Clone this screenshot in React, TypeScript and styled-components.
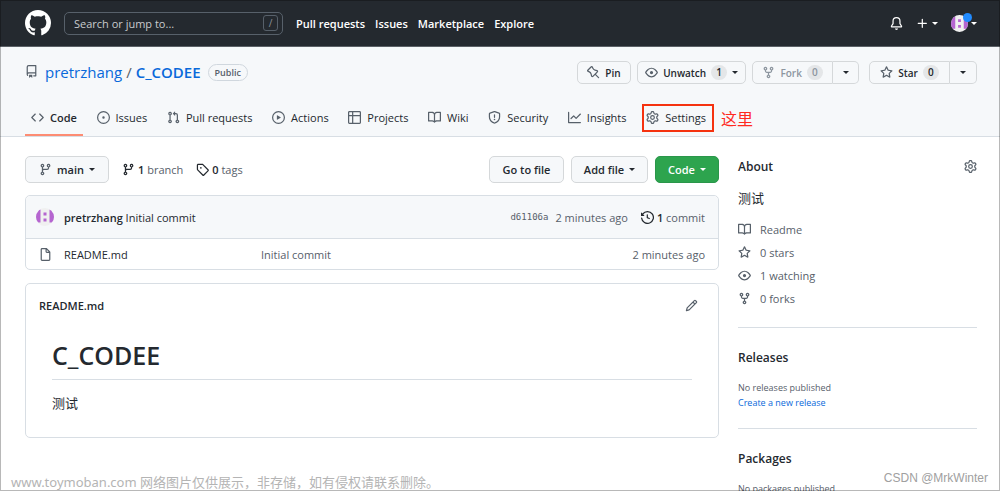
import React from "react";
import styled, { createGlobalStyle, css } from "styled-components";

const GlobalStyle = createGlobalStyle`
  * { box-sizing: border-box; }
  html, body { margin: 0; padding: 0; }
  body {
    background: #fff;
    color: #24292f;
    font-family: "Open Sans", "Noto Sans", "Noto Sans CJK SC", sans-serif;
    font-size: 11px;
    line-height: 15px;
  }
  a { color: inherit; text-decoration: none; }
  b { font-weight: 600; }
  h1, h2, h3, p, ul, dl { margin: 0; padding: 0; }
  button { font-family: inherit; cursor: pointer; }
`;

/* ---------- icons ---------- */

const paths = {
  mark: "M8 0C3.58 0 0 3.58 0 8c0 3.54 2.29 6.53 5.47 7.59.4.07.55-.17.55-.38 0-.19-.01-.82-.01-1.49-2.01.37-2.53-.49-2.69-.94-.09-.23-.48-.94-.82-1.13-.28-.15-.68-.52-.01-.53.63-.01 1.08.58 1.23.82.72 1.21 1.87.87 2.33.66.07-.52.28-.87.51-1.07-1.78-.2-3.64-.89-3.64-3.95 0-.87.31-1.59.82-2.15-.08-.2-.36-1.02.08-2.12 0 0 .67-.21 2.2.82.64-.18 1.32-.27 2-.27.68 0 1.36.09 2 .27 1.53-1.04 2.2-.82 2.2-.82.44 1.1.16 1.92.08 2.12.51.56.82 1.27.82 2.15 0 3.07-1.87 3.75-3.65 3.95.29.25.54.73.54 1.48 0 1.07-.01 1.93-.01 2.2 0 .21.15.46.55.38A8.013 8.013 0 0016 8c0-4.42-3.58-8-8-8z",
  code: "M4.72 3.22a.75.75 0 011.06 1.06L2.06 8l3.72 3.72a.75.75 0 11-1.06 1.06L.47 8.53a.75.75 0 010-1.06l4.25-4.25zm6.56 0a.75.75 0 10-1.06 1.06L13.94 8l-3.72 3.72a.75.75 0 101.06 1.06l4.25-4.25a.75.75 0 000-1.06l-4.25-4.25z",
  issue: "M8 9.5a1.5 1.5 0 100-3 1.5 1.5 0 000 3zM8 0a8 8 0 100 16A8 8 0 008 0zM1.5 8a6.5 6.5 0 1113 0 6.5 6.5 0 01-13 0z",
  pull: "M7.177 3.073L9.573.677A.25.25 0 0110 .854v4.792a.25.25 0 01-.427.177L7.177 3.427a.25.25 0 010-.354zM3.75 2.5a.75.75 0 100 1.5.75.75 0 000-1.5zm-2.25.75a2.25 2.25 0 113 2.122v5.256a2.251 2.251 0 11-1.5 0V5.372A2.25 2.25 0 011.5 3.25zM11 2.5h-1V4h1a1 1 0 011 1v5.628a2.251 2.251 0 101.5 0V5A2.5 2.5 0 0011 2.5zm1 10.25a.75.75 0 111.5 0 .75.75 0 01-1.5 0zM3.75 12a.75.75 0 100 1.5.75.75 0 000-1.5z",
  play: "M1.5 8a6.5 6.5 0 1113 0 6.5 6.5 0 01-13 0zM8 0a8 8 0 100 16A8 8 0 008 0zM6.379 5.227A.25.25 0 006 5.442v5.117a.25.25 0 00.379.214l4.264-2.559a.25.25 0 000-.428L6.379 5.227z",
  table: "M0 1.75C0 .784.784 0 1.75 0h12.5C15.216 0 16 .784 16 1.75v12.5A1.75 1.75 0 0114.25 16H1.75A1.75 1.75 0 010 14.25V1.75zM1.5 6.5v7.75c0 .138.112.25.25.25H5v-8H1.5zM5 5H1.5V1.75a.25.25 0 01.25-.25H5V5zm1.5 1.5v8h7.75a.25.25 0 00.25-.25V6.5h-8zm8-1.5h-8V1.5h7.75a.25.25 0 01.25.25V5z",
  book: "M0 1.75A.75.75 0 01.75 1h4.253c1.227 0 2.317.59 3 1.501A3.744 3.744 0 0111.006 1h4.245a.75.75 0 01.75.75v10.5a.75.75 0 01-.75.75h-4.507a2.25 2.25 0 00-1.591.659l-.622.621a.75.75 0 01-1.06 0l-.622-.621A2.25 2.25 0 005.258 13H.75a.75.75 0 01-.75-.75V1.75zm8.755 3a2.25 2.25 0 012.25-2.25H14.5v9h-3.757c-.71 0-1.4.201-1.992.572l.004-7.322zm-1.504 7.324l.004-5.073-.002-2.253A2.25 2.25 0 005.003 2.5H1.5v9h3.757a3.75 3.75 0 011.994.574z",
  shield: "M7.467.133a1.75 1.75 0 011.066 0l5.25 1.68A1.75 1.75 0 0115 3.48V7c0 1.566-.32 3.182-1.303 4.682-.983 1.498-2.585 2.813-5.032 3.855a1.7 1.7 0 01-1.33 0c-2.447-1.042-4.049-2.357-5.032-3.855C1.32 10.182 1 8.566 1 7V3.48a1.75 1.75 0 011.217-1.667l5.25-1.68zm.61 1.429a.25.25 0 00-.153 0l-5.25 1.68a.25.25 0 00-.174.238V7c0 1.358.275 2.666 1.057 3.86.784 1.194 2.121 2.34 4.366 3.297a.2.2 0 00.154 0c2.245-.956 3.582-2.104 4.366-3.298C13.225 9.666 13.5 8.36 13.5 7V3.48a.25.25 0 00-.174-.237l-5.25-1.68zM9 10.5a1 1 0 11-2 0 1 1 0 012 0zm-.25-5.75a.75.75 0 10-1.5 0v3a.75.75 0 001.5 0v-3z",
  graph: "M1.5 1.75a.75.75 0 00-1.5 0v12.5c0 .414.336.75.75.75h14.5a.75.75 0 000-1.5H1.5V1.75zm14.28 2.53a.75.75 0 00-1.06-1.06L10 7.94 7.53 5.47a.75.75 0 00-1.06 0L3.22 8.72a.75.75 0 001.06 1.06L7 7.06l2.47 2.47a.75.75 0 001.06 0l5.25-5.25z",
  gear: "M7.429 1.525a6.593 6.593 0 011.142 0c.036.003.108.036.137.146l.289 1.105c.147.56.55.967.997 1.189.174.086.341.183.501.29.417.278.97.423 1.53.27l1.102-.303c.11-.03.175.016.195.046.219.31.41.641.573.989.014.031.022.11-.059.19l-.815.806c-.411.406-.562.957-.53 1.456a4.588 4.588 0 010 .582c-.032.499.119 1.05.53 1.456l.815.806c.08.08.073.159.059.19a6.494 6.494 0 01-.573.99c-.02.029-.086.074-.195.045l-1.103-.303c-.559-.153-1.112-.008-1.529.27-.16.107-.327.204-.5.29-.449.222-.851.628-.998 1.189l-.289 1.105c-.029.11-.101.143-.137.146a6.613 6.613 0 01-1.142 0c-.036-.003-.108-.037-.137-.146l-.289-1.105c-.147-.56-.55-.967-.997-1.189a4.502 4.502 0 01-.501-.29c-.417-.278-.97-.423-1.53-.27l-1.102.303c-.11.03-.175-.016-.195-.046a6.492 6.492 0 01-.573-.989c-.014-.031-.022-.11.059-.19l.815-.806c.411-.406.562-.957.53-1.456a4.587 4.587 0 010-.582c.032-.499-.119-1.05-.53-1.456l-.815-.806c-.08-.08-.073-.159-.059-.19a6.44 6.44 0 01.573-.99c.02-.029.086-.075.195-.045l1.103.303c.559.153 1.112.008 1.529-.27.16-.107.327-.204.5-.29.449-.222.851-.628.998-1.189l.289-1.105c.029-.11.101-.143.137-.146zM8 0c-.236 0-.47.01-.701.03-.743.065-1.29.615-1.458 1.261l-.29 1.106c-.017.066-.078.158-.211.224a5.994 5.994 0 00-.668.386c-.123.082-.233.09-.3.071L3.27 2.776c-.644-.177-1.392.02-1.82.63a7.977 7.977 0 00-.704 1.217c-.315.675-.111 1.422.363 1.891l.815.806c.05.048.098.147.088.294a6.084 6.084 0 000 .772c.01.147-.038.246-.088.294l-.815.806c-.474.469-.678 1.216-.363 1.891.2.428.436.835.704 1.218.428.609 1.176.806 1.82.63l1.103-.303c.066-.019.176-.011.299.071.213.143.436.272.668.386.133.066.194.158.212.224l.289 1.106c.169.646.715 1.196 1.458 1.26a8.094 8.094 0 001.402 0c.743-.064 1.29-.614 1.458-1.26l.29-1.106c.017-.066.078-.158.211-.224a5.98 5.98 0 00.668-.386c.123-.082.233-.09.3-.071l1.102.302c.644.177 1.392-.02 1.82-.63.268-.382.505-.789.704-1.217.315-.675.111-1.422-.364-1.891l-.814-.806c-.05-.048-.098-.147-.088-.294a6.1 6.1 0 000-.772c-.01-.147.039-.246.088-.294l.814-.806c.475-.469.679-1.216.364-1.891a7.992 7.992 0 00-.704-1.218c-.428-.609-1.176-.806-1.82-.63l-1.103.303c-.066.019-.176.011-.299-.071a5.991 5.991 0 00-.668-.386c-.133-.066-.194-.158-.212-.224L10.16 1.29C9.99.645 9.444.095 8.701.031A8.094 8.094 0 008 0zm1.5 8a1.5 1.5 0 11-3 0 1.5 1.5 0 013 0zM11 8a3 3 0 11-6 0 3 3 0 016 0z",
  repo: "M2 2.5A2.5 2.5 0 014.5 0h8.75a.75.75 0 01.75.75v12.5a.75.75 0 01-.75.75h-2.5a.75.75 0 110-1.5h1.75v-2h-8a1 1 0 00-.714 1.7.75.75 0 01-1.072 1.05A2.495 2.495 0 012 11.5v-9zm10.5-1V9h-8c-.356 0-.694.074-1 .208V2.5a1 1 0 011-1h8zM5 12.25v3.25a.25.25 0 00.4.2l1.45-1.087a.25.25 0 01.3 0L8.6 15.7a.25.25 0 00.4-.2v-3.25a.25.25 0 00-.25-.25h-3.5a.25.25 0 00-.25.25z",
  pin: "M4.456.734a1.75 1.75 0 012.826.504l.613 1.327a3.081 3.081 0 002.084 1.707l2.454.584c1.332.317 1.8 1.972.832 2.94L11.06 10l3.72 3.72a.75.75 0 11-1.061 1.06L10 11.06l-2.204 2.205c-.968.968-2.623.5-2.94-.832l-.584-2.454a3.081 3.081 0 00-1.707-2.084l-1.327-.613a1.75 1.75 0 01-.504-2.826L4.456.734zM5.92 1.866a.25.25 0 00-.404-.072L1.794 5.516a.25.25 0 00.072.404l1.328.613A4.582 4.582 0 015.73 9.63l.584 2.454a.25.25 0 00.42.12l5.47-5.47a.25.25 0 00-.12-.42L9.63 5.73a4.581 4.581 0 01-3.098-2.537L5.92 1.866z",
  eye: "M1.679 7.932c.412-.621 1.242-1.75 2.366-2.717C5.175 4.242 6.527 3.5 8 3.5c1.473 0 2.824.742 3.955 1.715 1.124.967 1.954 2.096 2.366 2.717a.119.119 0 010 .136c-.412.621-1.242 1.75-2.366 2.717C10.825 11.758 9.473 12.5 8 12.5c-1.473 0-2.824-.742-3.955-1.715C2.92 9.818 2.09 8.69 1.679 8.068a.119.119 0 010-.136zM8 2c-1.981 0-3.67.992-4.933 2.078C1.797 5.169.88 6.423.43 7.1a1.619 1.619 0 000 1.798c.45.678 1.367 1.932 2.637 3.024C4.329 13.008 6.019 14 8 14c1.981 0 3.67-.992 4.933-2.078 1.27-1.091 2.187-2.345 2.637-3.023a1.619 1.619 0 000-1.798c-.45-.678-1.367-1.932-2.637-3.023C11.671 2.992 9.981 2 8 2zm0 8a2 2 0 100-4 2 2 0 000 4z",
  fork: "M5 3.25a.75.75 0 11-1.5 0 .75.75 0 011.5 0zm0 2.122a2.25 2.25 0 10-1.5 0v.878A2.25 2.25 0 005.75 8.5h1.5v2.128a2.251 2.251 0 101.5 0V8.5h1.5a2.25 2.25 0 002.25-2.25v-.878a2.25 2.25 0 10-1.5 0v.878a.75.75 0 01-.75.75h-4.5A.75.75 0 015 6.25v-.878zm3.75 7.378a.75.75 0 11-1.5 0 .75.75 0 011.5 0zm3-8.75a.75.75 0 100-1.5.75.75 0 000 1.5z",
  star: "M8 .25a.75.75 0 01.673.418l1.882 3.815 4.21.612a.75.75 0 01.416 1.279l-3.046 2.97.719 4.192a.75.75 0 01-1.088.791L8 12.347l-3.766 1.98a.75.75 0 01-1.088-.79l.72-4.194L.818 6.374a.75.75 0 01.416-1.28l4.21-.611L7.327.668A.75.75 0 018 .25zm0 2.445L6.615 5.5a.75.75 0 01-.564.41l-3.097.45 2.24 2.184a.75.75 0 01.216.664l-.528 3.084 2.769-1.456a.75.75 0 01.698 0l2.77 1.456-.53-3.084a.75.75 0 01.216-.664l2.24-2.183-3.096-.45a.75.75 0 01-.564-.41L8 2.694v.001z",
  branch: "M11.75 2.5a.75.75 0 100 1.5.75.75 0 000-1.5zm-2.25.75a2.25 2.25 0 113 2.122V6A2.5 2.5 0 0110 8.5H6a1 1 0 00-1 1v1.128a2.251 2.251 0 11-1.5 0V5.372a2.25 2.25 0 111.5 0v1.836A2.492 2.492 0 016 7h4a1 1 0 001-1v-.628A2.25 2.25 0 019.5 3.25zM4.25 12a.75.75 0 100 1.5.75.75 0 000-1.5zM3.5 3.25a.75.75 0 111.5 0 .75.75 0 01-1.5 0z",
  tag: "M2.5 7.775V2.75a.25.25 0 01.25-.25h5.025a.25.25 0 01.177.073l6.25 6.25a.25.25 0 010 .354l-5.025 5.025a.25.25 0 01-.354 0l-6.25-6.25a.25.25 0 01-.073-.177zm-1.5 0V2.75C1 1.784 1.784 1 2.75 1h5.025c.464 0 .91.184 1.238.513l6.25 6.25a1.75 1.75 0 010 2.474l-5.026 5.026a1.75 1.75 0 01-2.474 0l-6.25-6.25A1.75 1.75 0 011 7.775zM6 5a1 1 0 100 2 1 1 0 000-2z",
  history: "M1.643 3.143L.427 1.927A.25.25 0 000 2.104V5.75c0 .138.112.25.25.25h3.646a.25.25 0 00.177-.427L2.715 4.215a6.5 6.5 0 11-1.18 4.458.75.75 0 10-1.493.154 8.001 8.001 0 101.6-5.684zM7.75 4a.75.75 0 01.75.75v2.992l2.028.812a.75.75 0 01-.557 1.392l-2.5-1A.75.75 0 017 8.25v-3.5A.75.75 0 017.75 4z",
  file: "M3.75 1.5a.25.25 0 00-.25.25v12.5c0 .138.112.25.25.25h8.5a.25.25 0 00.25-.25V6H9.75A1.75 1.75 0 018 4.25V1.5H3.75zm5.75.56v2.19c0 .138.112.25.25.25h2.19L9.5 2.06zM2 1.75C2 .784 2.784 0 3.75 0h5.086c.464 0 .909.184 1.237.513l3.414 3.414c.329.328.513.773.513 1.237v9.086A1.75 1.75 0 0112.25 16h-8.5A1.75 1.75 0 012 14.25V1.75z",
  pencil: "M11.013 1.427a1.75 1.75 0 012.474 0l1.086 1.086a1.75 1.75 0 010 2.474l-8.61 8.61c-.21.21-.47.364-.756.445l-3.251.93a.75.75 0 01-.927-.928l.929-3.25a1.75 1.75 0 01.445-.758l8.61-8.61zm1.414 1.06a.25.25 0 00-.354 0L10.811 3.75l1.439 1.44 1.263-1.263a.25.25 0 000-.354l-1.086-1.086zM11.189 6.25L9.75 4.81l-6.286 6.287a.25.25 0 00-.064.108l-.558 1.953 1.953-.558a.249.249 0 00.108-.064l6.286-6.286z",
  bell: "M8 16a2 2 0 001.985-1.75c.017-.137-.097-.25-.235-.25h-3.5c-.138 0-.252.113-.235.25A2 2 0 008 16zM8 1.5A3.5 3.5 0 004.5 5v2.947c0 .346-.102.683-.294.97l-1.703 2.556a.018.018 0 00-.003.01l.001.006c0 .002.002.004.004.006a.017.017 0 00.006.004l.007.001h10.964l.007-.001a.016.016 0 00.006-.004.016.016 0 00.004-.006l.001-.007a.017.017 0 00-.003-.01l-1.703-2.554a1.75 1.75 0 01-.294-.97V5A3.5 3.5 0 008 1.5zM3 5a5 5 0 0110 0v2.947c0 .05.015.098.042.139l1.703 2.555A1.518 1.518 0 0113.482 13H2.518a1.518 1.518 0 01-1.263-2.36l1.703-2.554A.25.25 0 003 7.947V5z",
  plus: "M7.75 2a.75.75 0 01.75.75V7h4.25a.75.75 0 110 1.5H8.5v4.25a.75.75 0 11-1.5 0V8.5H2.75a.75.75 0 010-1.5H7V2.75A.75.75 0 017.75 2z",
};

type IconName = keyof typeof paths;

const Svg = styled.svg<{ $color?: string }>`
  display: block;
  flex: none;
  fill: ${(p) => p.$color || "currentColor"};
`;

function Icon({ name, size = 13, color }: { name: IconName; size?: number; color?: string }) {
  return (
    <Svg viewBox="0 0 16 16" width={size} height={size} $color={color} aria-hidden="true">
      <path fillRule="evenodd" d={paths[name]} />
    </Svg>
  );
}

const Caret = styled.span`
  flex: none;
  width: 0;
  height: 0;
  border: 3px solid transparent;
  border-top: 3px solid currentColor;
  border-bottom: 0;
`;

function Identicon({ size }: { size: number }) {
  return (
    <Svg viewBox="0 0 18 18" width={size} height={size} role="img" aria-label="@pretrzhang">
      <clipPath id={"round" + size}>
        <circle cx="9" cy="9" r="9" />
      </clipPath>
      <g clipPath={`url(#round${size})`}>
        <rect width="18" height="18" fill="#f0f0f0" />
        <path
          fill="#b565d0"
          d="M0 1.500h4.500v13H0zM13.500 1.500h4.500v13h-4.500zM7.500 4.500h3v3h-3zM7.500 10.500h3v3h-3z"
        />
      </g>
    </Svg>
  );
}

/* ---------- page frame ---------- */

const Page = styled.div`
  position: relative;
  height: 100vh;
  overflow: hidden;
`;

const Frame = styled.div`
  position: absolute;
  inset: 0;
  border: 1px solid rgba(0, 0, 0, 0.28);
  pointer-events: none;
`;

/* ---------- top bar ---------- */

const TopBar = styled.header`
  display: flex;
  align-items: center;
  height: 47px;
  padding: 0 23px 0 25px;
  background: #24292f;
  border-bottom: 1px solid #5b6066;
  color: #fff;
`;

const SearchBox = styled.label`
  display: flex;
  align-items: center;
  width: 219px;
  height: 23px;
  margin: 0 13px;
  padding: 0 4px 0 9px;
  border: 1px solid #57606a;
  border-radius: 5px;
`;

const SearchInput = styled.input`
  flex: 1;
  min-width: 0;
  padding: 0;
  border: 0;
  outline: 0;
  background: transparent;
  color: #fff;
  font: inherit;
  &::placeholder { color: #c8cbce; opacity: 1; }
`;

const SlashKey = styled.kbd`
  width: 15px;
  height: 16px;
  border: 1px solid #57606a;
  border-radius: 3px;
  color: #8b9198;
  font: 10px/14px "Open Sans", sans-serif;
  text-align: center;
`;

const TopNav = styled.nav`
  display: flex;
  flex: 1;
  gap: 10px;
  font-weight: 600;
`;

const TopActions = styled.div`
  display: flex;
  align-items: center;
  gap: 13px;
`;

const BareButton = styled.button<{ $gap?: number }>`
  position: relative;
  display: flex;
  align-items: center;
  gap: ${(p) => p.$gap || 0}px;
  padding: 0;
  border: 0;
  background: none;
  color: inherit;
`;

const UnreadDot = styled.span`
  position: absolute;
  top: -2px;
  left: 12px;
  width: 9px;
  height: 9px;
  border-radius: 50%;
  background: #218bff;
`;

/* ---------- repository head ---------- */

const RepoHead = styled.div`
  padding: 14px 23px 0 25px;
  background: #f6f8fa;
  border-bottom: 1px solid #d8dee4;
`;

const TitleRow = styled.div`
  display: flex;
  align-items: center;
  justify-content: space-between;
  height: 23px;
`;

const RepoTitle = styled.h1`
  display: flex;
  align-items: center;
  color: #57606a;
  font-size: 15px;
  line-height: 23px;
  font-weight: 400;
`;

const Crumb = styled.a<{ $strong?: boolean }>`
  color: #0969da;
  font-weight: ${(p) => (p.$strong ? 600 : 400)};
`;

const IconSlot = styled.span`
  margin: 0 7px 0 0;
  padding-bottom: 2px;
`;

const Slash = styled.span`
  margin: 0 4px;
`;

const Visibility = styled.span`
  margin-left: 7px;
  padding: 0 6px;
  border: 1px solid #d0d7de;
  border-radius: 9px;
  color: #57606a;
  font-size: 9px;
  line-height: 15px;
  font-weight: 600;
`;

const HeadActions = styled.div`
  display: flex;
  gap: 6px;
`;

const buttonFace = css`
  display: flex;
  align-items: center;
  justify-content: center;
  border: 1px solid #d5d8da;
  background: #f6f8fa;
  color: #24292f;
  font-weight: 600;
`;

const SmallButton = styled.button<{ $width: number; $muted?: boolean; $side?: "left" | "right" }>`
  ${buttonFace}
  width: ${(p) => p.$width}px;
  height: 23px;
  padding: 0;
  gap: 5px;
  border-radius: ${(p) => (p.$side === "left" ? "5px 0 0 5px" : p.$side === "right" ? "0 5px 5px 0" : "5px")};
  ${(p) => p.$side === "right" && "border-left: 0;"}
  ${(p) => p.$muted && "color: #8c959f;"}
  font-size: 10px;
`;

const Split = styled.div<{ $wide?: boolean }>`
  display: flex;
  margin-left: ${(p) => (p.$wide ? 4 : 0)}px;
`;

const Counter = styled.span`
  min-width: 15px;
  padding: 0 5px;
  border-radius: 8px;
  background: #e4e6e8;
  color: inherit;
  line-height: 15px;
`;

const TabRow = styled.div`
  display: flex;
  align-items: stretch;
  gap: 9px;
  height: 52px;
  padding-top: 16px;
`;

const Tabs = styled.nav`
  display: flex;
  justify-content: space-between;
  width: 100%;
  max-width: 687px;
`;

const Tab = styled.a<{ $current?: boolean; $marked?: boolean }>`
  position: relative;
  display: flex;
  align-items: center;
  gap: 6px;
  padding: 0 6px;
  border-bottom: 2px solid ${(p) => (p.$current ? "#fd8c73" : "transparent")};
  font-weight: ${(p) => (p.$current ? 600 : 400)};
  ${(p) =>
    p.$marked &&
    css`
      &::after {
        content: "";
        position: absolute;
        inset: 4px -2px 2px 2px;
        border: 2px solid #f5320f;
      }
    `}
`;

const Note = styled.span`
  align-self: center;
  flex: none;
  color: #ff2a1f;
  font-family: "Noto Sans CJK SC", sans-serif;
  font-size: 16px;
`;

/* ---------- content ---------- */

const Content = styled.div`
  display: grid;
  grid-template-columns: minmax(0, 1fr) 239px;
  gap: 19px;
  padding: 19px 23px 0 25px;
`;

const Toolbar = styled.div`
  display: flex;
  align-items: center;
  margin-bottom: 12px;
`;

const Button = styled.button<{ $width: number; $primary?: boolean }>`
  ${buttonFace}
  width: ${(p) => p.$width}px;
  height: 27px;
  padding: 0;
  gap: 5px;
  border-radius: 5px;
  font-size: 11px;
  ${(p) => p.$primary && "background: #2da44e; border-color: #2a964a; color: #fff;"}
`;

const Stat = styled.a`
  display: flex;
  align-items: center;
  gap: 3px;
  color: #57606a;
  b { color: #24292f; }
`;

const Stats = styled.div`
  display: flex;
  gap: 13px;
  margin-left: 13px;
`;

const ToolbarEnd = styled.div`
  display: flex;
  gap: 7px;
  margin-left: auto;
`;

const Box = styled.section`
  border: 1px solid #d8dee4;
  border-radius: 5px;
  margin-bottom: 13px;
`;

const CommitBar = styled.div`
  display: flex;
  align-items: center;
  height: 43px;
  padding: 0 13px 0 10px;
  border-bottom: 1px solid #d8dee4;
  border-radius: 5px 5px 0 0;
  background: #f6f8fa;
`;

const CommitMessage = styled.p`
  flex: 1;
  margin-left: 10px;
`;

const CommitMeta = styled.div`
  display: flex;
  align-items: center;
  gap: 13px;
  color: #57606a;
`;

const CommitTime = styled.div`
  display: flex;
  align-items: center;
  gap: 7px;
`;

const Sha = styled.a`
  font-family: "DejaVu Sans Mono", monospace;
  font-size: 9px;
`;

const Files = styled.table`
  width: 100%;
  border-collapse: collapse;
  table-layout: fixed;
`;

const Cell = styled.td<{ $width?: number; $muted?: boolean; $end?: boolean }>`
  width: ${(p) => (p.$width ? p.$width + "px" : "auto")};
  height: 30px;
  padding: 0;
  color: ${(p) => (p.$muted ? "#57606a" : "inherit")};
  text-align: ${(p) => (p.$end ? "right" : "left")};
  padding-right: ${(p) => (p.$end ? 13 : 0)}px;
`;

const FileIcon = styled.span`
  display: block;
  padding-left: 13px;
`;

const ReadmeHead = styled.div`
  display: flex;
  align-items: center;
  justify-content: space-between;
  height: 42px;
  padding: 0 20px 0 13px;
`;

const ReadmeName = styled.h2`
  font-size: 11px;
  font-weight: 600;
`;

const ReadmeBody = styled.article`
  padding: 12px 26px 24px;
  font-size: 13px;
  line-height: 20px;
`;

const ReadmeTitle = styled.h1`
  margin-bottom: 13px;
  padding-bottom: 7px;
  border-bottom: 1px solid #d8dee4;
  font-size: 25px;
  line-height: 34px;
  font-weight: 600;
`;

/* ---------- sidebar ---------- */

const SideSection = styled.section`
  & + & {
    margin-top: 18px;
    padding-top: 19px;
    border-top: 1px solid #d8dee4;
  }
`;

const SideTitle = styled.h2`
  display: flex;
  align-items: center;
  justify-content: space-between;
  height: 20px;
  font-size: 12px;
  font-weight: 600;
`;

const Description = styled.p`
  margin: 12px 0 14px;
  font-size: 13px;
  line-height: 20px;
`;

const Facts = styled.ul`
  display: grid;
  gap: 8px;
  padding-bottom: 3px;
  list-style: none;
  color: #57606a;
`;

const Fact = styled.a`
  display: flex;
  align-items: center;
  gap: 9px;
`;

const SideNote = styled.p<{ $link?: boolean }>`
  color: ${(p) => (p.$link ? "#0969da" : "#57606a")};
  font-size: 9px;
  line-height: 15px;
`;

const SideBody = styled.div`
  margin-top: 13px;
`;

/* ---------- watermarks ---------- */

const Watermark = styled.div<{ $end?: boolean }>`
  position: absolute;
  bottom: ${(p) => (p.$end ? 4 : 0)}px;
  ${(p) => (p.$end ? "right: 12px;" : "left: 11px;")}
  color: ${(p) => (p.$end ? "#a0a0a0" : "#b4b4b4")};
  font-family: ${(p) => (p.$end ? '"Liberation Sans"' : '"Noto Sans"')}, "Noto Sans CJK SC", sans-serif;
  font-size: ${(p) => (p.$end ? 12 : 13)}px;
  line-height: 17px;
`;

const tabs: { icon: IconName; label: string; current?: boolean; marked?: boolean }[] = [
  { icon: "code", label: "Code", current: true },
  { icon: "issue", label: "Issues" },
  { icon: "pull", label: "Pull requests" },
  { icon: "play", label: "Actions" },
  { icon: "table", label: "Projects" },
  { icon: "book", label: "Wiki" },
  { icon: "shield", label: "Security" },
  { icon: "graph", label: "Insights" },
  { icon: "gear", label: "Settings", marked: true },
];

const facts: { icon: IconName; label: string }[] = [
  { icon: "book", label: "Readme" },
  { icon: "star", label: "0 stars" },
  { icon: "eye", label: "1 watching" },
  { icon: "fork", label: "0 forks" },
];

export default function App() {
  return (
    <Page>
      <GlobalStyle />
      <TopBar>
        <a href="#home" aria-label="Homepage">
          <Icon name="mark" size={26} />
        </a>
        <SearchBox>
          <SearchInput type="text" placeholder="Search or jump to..." aria-label="Search" />
          <SlashKey>/</SlashKey>
        </SearchBox>
        <TopNav>
          <a href="#pulls">Pull requests</a>
          <a href="#issues">Issues</a>
          <a href="#marketplace">Marketplace</a>
          <a href="#explore">Explore</a>
        </TopNav>
        <TopActions>
          <BareButton aria-label="Notifications">
            <Icon name="bell" />
          </BareButton>
          <BareButton $gap={3} aria-label="Create new">
            <Icon name="plus" />
            <Caret />
          </BareButton>
          <BareButton $gap={3} aria-label="Account">
            <Identicon size={17} />
            <Caret />
            <UnreadDot />
          </BareButton>
        </TopActions>
      </TopBar>

      <RepoHead>
        <TitleRow>
          <RepoTitle>
            <IconSlot>
              <Icon name="repo" />
            </IconSlot>
            <Crumb href="#owner">pretrzhang</Crumb>
            <Slash>/</Slash>
            <Crumb href="#repo" $strong>C_CODEE</Crumb>
            <Visibility>Public</Visibility>
          </RepoTitle>
          <HeadActions>
            <SmallButton $width={54}>
              <Icon name="pin" color="#57606a" /> Pin
            </SmallButton>
            <SmallButton $width={109}>
              <Icon name="eye" color="#57606a" /> Unwatch <Counter>1</Counter> <Caret />
            </SmallButton>
            <Split>
              <SmallButton $width={81} $muted $side="left">
                <Icon name="fork" /> Fork <Counter>0</Counter>
              </SmallButton>
              <SmallButton $width={26} $side="right" aria-label="Fork options">
                <Caret />
              </SmallButton>
            </Split>
            <Split $wide>
              <SmallButton $width={81} $side="left">
                <Icon name="star" color="#57606a" /> Star <Counter>0</Counter>
              </SmallButton>
              <SmallButton $width={27} $side="right" aria-label="Star lists">
                <Caret />
              </SmallButton>
            </Split>
          </HeadActions>
        </TitleRow>
        <TabRow>
          <Tabs>
            {tabs.map((t) => (
              <Tab key={t.label} href={"#" + t.icon} $current={t.current} $marked={t.marked}>
                <Icon name={t.icon} color="#57606a" />
                {t.label}
              </Tab>
            ))}
          </Tabs>
          <Note>这里</Note>
        </TabRow>
      </RepoHead>

      <Content>
        <main>
          <Toolbar>
            <Button $width={84}>
              <Icon name="branch" color="#57606a" /> main <Caret />
            </Button>
            <Stats>
              <Stat href="#branches">
                <Icon name="branch" color="#24292f" />
                <span><b>1</b> branch</span>
              </Stat>
              <Stat href="#tags">
                <Icon name="tag" color="#24292f" />
                <span><b>0</b> tags</span>
              </Stat>
            </Stats>
            <ToolbarEnd>
              <Button $width={75}>Go to file</Button>
              <Button $width={77}>Add file <Caret /></Button>
              <Button $width={64} $primary>Code <Caret /></Button>
            </ToolbarEnd>
          </Toolbar>

          <Box>
            <CommitBar>
              <Identicon size={18} />
              <CommitMessage>
                <a href="#author"><b>pretrzhang</b></a> <a href="#commit">Initial commit</a>
              </CommitMessage>
              <CommitMeta>
                <CommitTime>
                  <Sha href="#sha">d61106a</Sha>
                  <span>2 minutes ago</span>
                </CommitTime>
                <Stat href="#commits">
                  <Icon name="history" color="#24292f" />
                  <span><b>1</b> commit</span>
                </Stat>
              </CommitMeta>
            </CommitBar>
            <Files>
              <tbody>
                <tr>
                  <Cell $width={38}>
                    <FileIcon><Icon name="file" color="#57606a" /></FileIcon>
                  </Cell>
                  <Cell $width={197}><a href="#readme">README.md</a></Cell>
                  <Cell $muted><a href="#commit">Initial commit</a></Cell>
                  <Cell $muted $end>2 minutes ago</Cell>
                </tr>
              </tbody>
            </Files>
          </Box>

          <Box>
            <ReadmeHead>
              <ReadmeName>README.md</ReadmeName>
              <BareButton aria-label="Edit this file">
                <Icon name="pencil" color="#57606a" />
              </BareButton>
            </ReadmeHead>
            <ReadmeBody>
              <ReadmeTitle>C_CODEE</ReadmeTitle>
              <p>测试</p>
            </ReadmeBody>
          </Box>
        </main>

        <aside>
          <SideSection>
            <SideTitle>
              About
              <BareButton aria-label="Edit repository details">
                <Icon name="gear" color="#57606a" />
              </BareButton>
            </SideTitle>
            <Description>测试</Description>
            <Facts>
              {facts.map((f) => (
                <li key={f.label}>
                  <Fact href={"#" + f.icon}>
                    <Icon name={f.icon} />
                    {f.label}
                  </Fact>
                </li>
              ))}
            </Facts>
          </SideSection>
          <SideSection>
            <SideTitle>Releases</SideTitle>
            <SideBody>
              <SideNote>No releases published</SideNote>
              <SideNote $link><a href="#new-release">Create a new release</a></SideNote>
            </SideBody>
          </SideSection>
          <SideSection>
            <SideTitle>Packages</SideTitle>
            <SideBody>
              <SideNote>No packages published</SideNote>
            </SideBody>
          </SideSection>
        </aside>
      </Content>

      <Watermark>www.toymoban.com 网络图片仅供展示，非存储，如有侵权请联系删除。</Watermark>
      <Watermark $end>CSDN @MrkWinter</Watermark>
      <Frame />
    </Page>
  );
}
